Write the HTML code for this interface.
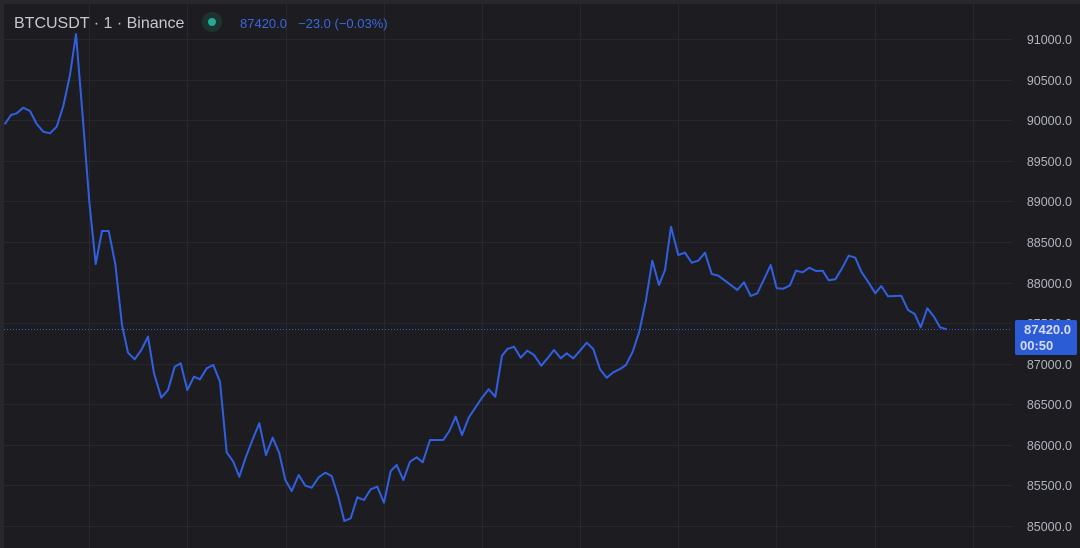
<!DOCTYPE html>
<html><head><meta charset="utf-8"><style>
html,body{margin:0;padding:0;background:#1d1c21;width:1080px;height:548px;overflow:hidden;font-family:"Liberation Sans",sans-serif}
</style></head><body>
<svg width="1080" height="548" xmlns="http://www.w3.org/2000/svg" style="position:absolute;left:0;top:0">
<rect width="1080" height="548" fill="#1d1c21"/>
<rect width="1080" height="4" fill="#28272c"/>
<rect width="4" height="548" fill="#28272c"/>
<g stroke="#28272d" stroke-width="1">
<line x1="89.5" y1="4" x2="89.5" y2="548"/><line x1="187.5" y1="4" x2="187.5" y2="548"/><line x1="286.5" y1="4" x2="286.5" y2="548"/><line x1="384.5" y1="4" x2="384.5" y2="548"/><line x1="482.5" y1="4" x2="482.5" y2="548"/><line x1="580.5" y1="4" x2="580.5" y2="548"/><line x1="678.5" y1="4" x2="678.5" y2="548"/><line x1="776.5" y1="4" x2="776.5" y2="548"/><line x1="875.5" y1="4" x2="875.5" y2="548"/><line x1="973.5" y1="4" x2="973.5" y2="548"/>
<line x1="4" y1="39.5" x2="1012" y2="39.5"/><line x1="4" y1="80.5" x2="1012" y2="80.5"/><line x1="4" y1="120.5" x2="1012" y2="120.5"/><line x1="4" y1="161.5" x2="1012" y2="161.5"/><line x1="4" y1="201.5" x2="1012" y2="201.5"/><line x1="4" y1="242.5" x2="1012" y2="242.5"/><line x1="4" y1="283.5" x2="1012" y2="283.5"/><line x1="4" y1="323.5" x2="1012" y2="323.5"/><line x1="4" y1="364.5" x2="1012" y2="364.5"/><line x1="4" y1="404.5" x2="1012" y2="404.5"/><line x1="4" y1="445.5" x2="1012" y2="445.5"/><line x1="4" y1="485.5" x2="1012" y2="485.5"/><line x1="4" y1="526.5" x2="1012" y2="526.5"/>
</g>
<line x1="4" y1="329.5" x2="1012" y2="329.5" stroke="#2f5fd8" stroke-width="1" stroke-dasharray="1 2"/>
<polyline fill="none" stroke="#3060e0" stroke-width="2" stroke-linejoin="round" points="4.7,124.3 11,115 16.7,113.3 23.3,107.7 30,111 36.7,124 43.3,131.7 50,133.3 56.7,126.7 63.3,106 70,75 76,34 82.7,116.7 89.3,201.7 95.7,264 102,231 108.7,231 115.3,264 122,325 128,352.7 134.7,359.3 141.3,350 148,336.7 154,373.3 161.3,397.7 168,390 174.7,366.7 180.7,363.3 187.3,390 194,376.7 200,379.3 206.7,368.3 213.3,365 220,381.7 226.7,452.3 233.3,461.7 239.3,476.7 246,456.7 252.7,439.3 259.3,423.3 266,455 272.7,437.7 279.3,453.3 285.3,480 291.7,491 298.7,475 305.3,485.7 311.7,487.7 318.7,477.3 325.3,472.7 331.7,476 338.3,496.7 344.3,521 350.7,518.3 357.3,497.3 364,500 370.7,489.3 377.3,486.7 384,502.7 390.7,471 396.7,465 403.3,480 410,461.7 416.7,457.3 422.7,462.3 430,440 443.3,440 449.3,431 455.7,416.7 462,435 468.7,417.7 475.3,407.7 482,397.7 488.7,389.3 495.3,396.7 502,355.7 507.3,349 514,346.7 520.7,357.7 527.3,350.7 534,355 541.3,365.7 548,357.7 554,350 560.7,358.3 566.7,353.3 573.3,358.3 580,350.7 586.7,342.7 593.3,349 600,369.3 606.7,377.7 613.3,372.3 620,369 626,365 632.7,351.7 639.3,331.7 646,300 652.3,260.7 659,285 665,270 671,226.7 678.3,255 685,252.7 691.7,262.7 698.3,260.7 705,252.7 711.7,274 718.3,275.7 725,280.7 731.7,285.7 737.3,290 744,282.3 750.7,296 757.3,293.3 764,279.3 770.7,265 776.7,288.3 783.3,288.7 790,285.3 796,270.7 802.7,272.3 809.3,267.7 816,271 822.7,270.7 828.7,280.3 835.3,279.3 842,268.3 848.7,255.7 855.3,257.7 861.3,271.7 868.7,282.7 875.3,293.3 881.3,286 888,296.3 901.3,295.7 908,310 914.7,314 920.7,327.3 927.3,308.3 934,316.7 940,327.3 946.7,329.3"/>
<g fill="#b2b5be" font-size="12.5" text-anchor="end" font-family="Liberation Sans, sans-serif">
<text x="1072" y="44">91000.0</text><text x="1072" y="85">90500.0</text><text x="1072" y="125">90000.0</text><text x="1072" y="166">89500.0</text><text x="1072" y="206">89000.0</text><text x="1072" y="247">88500.0</text><text x="1072" y="288">88000.0</text><text x="1072" y="369">87000.0</text><text x="1072" y="409">86500.0</text><text x="1072" y="450">86000.0</text><text x="1072" y="490">85500.0</text><text x="1072" y="531">85000.0</text>
</g>
<text x="1072" y="328" fill="#b2b5be" font-size="12.5" text-anchor="end">87500.0</text>
<rect x="1015" y="320" width="62" height="35" rx="2" fill="#2c5bd6"/>
<text x="1071" y="334" fill="#d6dcf5" font-size="13" text-anchor="end" font-weight="bold">87420.0</text>
<text x="1020" y="350" fill="#d6dcf5" font-size="13" font-weight="bold">00:50</text>
<text x="14" y="28" fill="#c5c7cf" font-size="16">BTCUSDT · 1 · Binance</text>
<circle cx="212" cy="22" r="10" fill="#1f3a34" opacity="0.8"/>
<circle cx="212" cy="22" r="4" fill="#22ab94"/>
<text x="240" y="28" fill="#3767e0" font-size="13">87420.0</text>
<text x="298" y="28" fill="#3767e0" font-size="13">−23.0 (−0.03%)</text>
</svg>
</body></html>
